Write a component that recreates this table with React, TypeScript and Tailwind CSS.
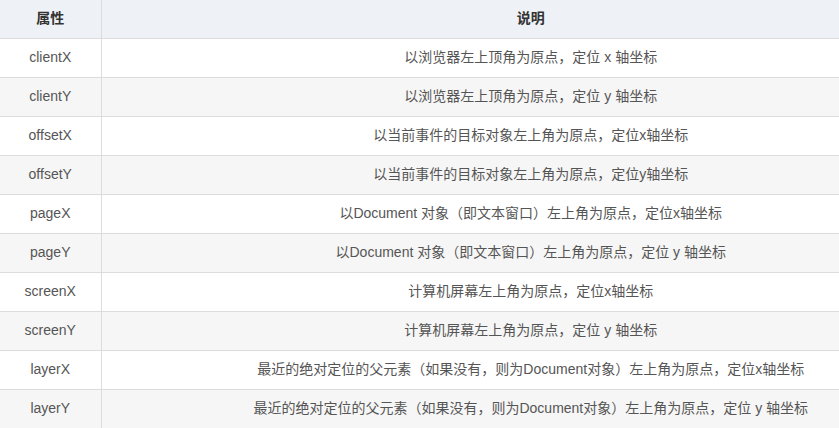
import React from 'react';

const rows: [string, string][] = [
  ['clientX', '以浏览器左上顶角为原点，定位 x 轴坐标'],
  ['clientY', '以浏览器左上顶角为原点，定位 y 轴坐标'],
  ['offsetX', '以当前事件的目标对象左上角为原点，定位x轴坐标'],
  ['offsetY', '以当前事件的目标对象左上角为原点，定位y轴坐标'],
  ['pageX', '以Document 对象（即文本窗口）左上角为原点，定位x轴坐标'],
  ['pageY', '以Document 对象（即文本窗口）左上角为原点，定位 y 轴坐标'],
  ['screenX', '计算机屏幕左上角为原点，定位x轴坐标'],
  ['screenY', '计算机屏幕左上角为原点，定位 y 轴坐标'],
  ['layerX', '最近的绝对定位的父元素（如果没有，则为Document对象）左上角为原点，定位x轴坐标'],
  ['layerY', '最近的绝对定位的父元素（如果没有，则为Document对象）左上角为原点，定位 y 轴坐标'],
];

const App: React.FC = () => {
  return (
    <div
      className="w-[839px] h-[428px] overflow-hidden bg-white text-[14px] text-[#555]"
      style={{ fontFamily: '"Liberation Sans", Arial, "Noto Sans CJK SC", sans-serif' }}
    >
      <table className="w-[960px] border-collapse table-fixed">
        <colgroup>
          <col className="w-[101px]" />
          <col />
        </colgroup>
        <thead>
          <tr className="bg-[#eef1f5] h-[38px]">
            <th className="p-0 border-r border-b border-[#dcdcdc] font-bold text-[#333] text-center">属性</th>
            <th className="p-0 border-b border-[#dcdcdc] font-bold text-[#333] text-center">说明</th>
          </tr>
        </thead>
        <tbody>
          {rows.map(([name, desc], i) => (
            <tr key={name} className={i % 2 === 0 ? 'bg-white h-[39px]' : 'bg-[#f6f6f6] h-[39px]'}>
              <td className="p-0 border-r border-b border-[#dcdcdc] text-center">{name}</td>
              <td className="p-0 border-b border-[#dcdcdc] text-center">{desc}</td>
            </tr>
          ))}
        </tbody>
      </table>
    </div>
  );
};

export default App;
